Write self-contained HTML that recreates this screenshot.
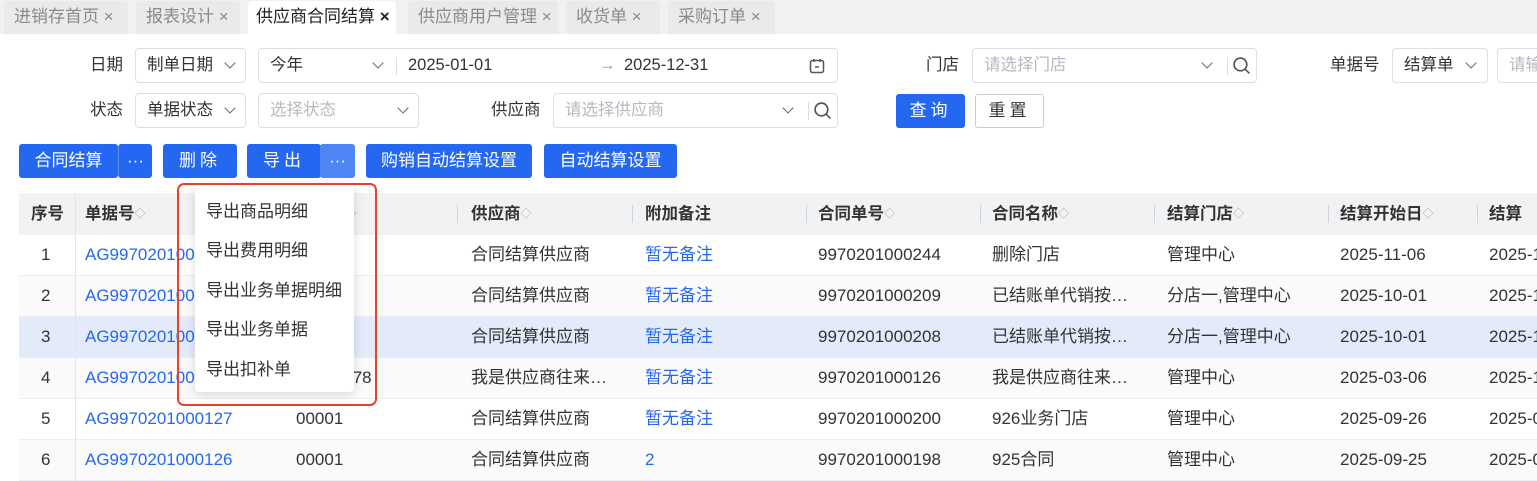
<!DOCTYPE html>
<html><head><meta charset="utf-8"><style>
*{box-sizing:border-box;margin:0;padding:0}
body{width:1537px;height:481px;overflow:hidden;background:#fff;font-family:"Liberation Sans","Noto Sans CJK SC",sans-serif;font-size:17px;color:#333;position:relative}
.a{position:absolute;white-space:nowrap}
.tabbar{position:absolute;left:0;top:0;width:1537px;height:34px;background:#f0f1f3}
.tab{position:absolute;top:1px;height:33px;background:#e9eaec;color:#8a8a8a;font-size:17px;line-height:32px;padding-left:10px;border-radius:4px 4px 0 0}
.tab.act{background:#fff;color:#222}
.box{position:absolute;border:1px solid #dcdfe6;border-radius:4px;background:#fff;height:35px;line-height:33px;padding-left:11px;font-size:16.5px;color:#333}
.ph{color:#b6b9bf}
.lbl{position:absolute;font-size:16.5px;color:#333;line-height:35px}
.chev{position:absolute;top:12px;width:8px;height:8px;border-right:1.5px solid #666;border-bottom:1.5px solid #666;transform:rotate(45deg)}
.btn{position:absolute;top:144px;height:34px;background:#2468f2;color:#fff;border-radius:3px;line-height:34px;text-align:center;font-size:17px}
.th{position:absolute;top:193px;height:42px;line-height:42px;font-weight:bold;font-size:16.5px;color:#333}
.sep{position:absolute;top:205px;width:1px;height:18px;background:#d0d3d8}
.row{position:absolute;left:19px;width:1518px;height:41px;border-bottom:1px solid #ebeef5}
.c{position:absolute;line-height:40px;font-size:17px;color:#333;white-space:nowrap}
.blue{color:#2468f2}
.sort{font-weight:normal;color:#aaa;font-size:11px;vertical-align:2px}
.mi{position:absolute;left:206px;font-size:17px;color:#333}
</style></head><body>
<div class="tabbar"></div>
<div class="tab" style="left:4px;width:124px">进销存首页 ×</div>
<div class="tab" style="left:136px;width:104px">报表设计 ×</div>
<div class="tab act" style="left:248px;width:148px;padding-left:8px">供应商合同结算 <b>×</b></div>
<div class="tab" style="left:408px;width:150px">供应商用户管理 ×</div>
<div class="tab" style="left:566px;width:94px">收货单 ×</div>
<div class="tab" style="left:668px;width:107px">采购订单 ×</div>

<div class="lbl" style="left:90px;top:48px">日期</div>
<div class="box" style="left:135px;top:48px;width:111px">制单日期<span class="chev" style="left:90px;top:10px"></span></div>
<div class="box" style="left:258px;top:48px;width:580px">今年<span class="chev" style="left:115px;top:10px"></span>
<span class="a" style="left:137px;top:8px;width:1px;height:18px;background:#ddd"></span>
<span class="a" style="left:149px;top:0">2025-01-01</span>
<span class="a" style="left:340px;top:0;color:#999">→</span>
<span class="a" style="left:365px;top:0">2025-12-31</span>
<svg class="a" style="left:549px;top:8px" width="18" height="18" viewBox="0 0 18 18" fill="none" stroke="#555" stroke-width="1.5"><rect x="2.5" y="3.5" width="13" height="12" rx="2"/><path d="M6 2v3M12 2v3M7 10h4"/></svg>
</div>
<div class="lbl" style="left:926px;top:48px">门店</div>
<div class="box ph" style="left:972px;top:48px;width:285px">请选择门店<span class="chev" style="left:230px;top:10px"></span>
<span class="a" style="left:254px;top:8px;width:1px;height:18px;background:#ddd"></span>
<svg class="a" style="left:259px;top:7px" width="19" height="19" viewBox="0 0 18 18" fill="none" stroke="#555" stroke-width="1.6"><circle cx="8" cy="8" r="6"/><path d="M12.5 12.5l4 4"/></svg></div>
<div class="lbl" style="left:1330px;top:48px">单据号</div>
<div class="box" style="left:1392px;top:48px;width:96px">结算单<span class="chev" style="left:74px;top:10px"></span></div>
<div class="box ph" style="left:1497px;top:48px;width:60px">请输</div>

<div class="lbl" style="left:90px;top:93px">状态</div>
<div class="box" style="left:135px;top:93px;width:111px">单据状态<span class="chev" style="left:90px;top:10px"></span></div>
<div class="box ph" style="left:258px;top:93px;width:161px">选择状态<span class="chev" style="left:140px;top:10px"></span></div>
<div class="lbl" style="left:491px;top:93px">供应商</div>
<div class="box ph" style="left:553px;top:93px;width:285px">请选择供应商<span class="chev" style="left:230px;top:10px"></span>
<span class="a" style="left:254px;top:8px;width:1px;height:18px;background:#ddd"></span>
<svg class="a" style="left:259px;top:7px" width="19" height="19" viewBox="0 0 18 18" fill="none" stroke="#555" stroke-width="1.6"><circle cx="8" cy="8" r="6"/><path d="M12.5 12.5l4 4"/></svg></div>
<div class="a" style="left:896px;top:94px;width:69px;height:34px;background:#2468f2;color:#fff;border-radius:3px;line-height:34px;text-align:center;letter-spacing:4px;font-size:17px">查询</div>
<div class="a" style="left:975px;top:94px;width:69px;height:34px;border:1px solid #ccc;border-radius:3px;line-height:32px;text-align:center;letter-spacing:4px;font-size:17px">重置</div>

<div class="btn" style="left:19px;width:99px">合同结算</div>
<div class="btn" style="left:118px;width:34px;border-left:1px solid #5a8ef5">···</div>
<div class="btn" style="left:163px;width:74px;letter-spacing:4px">删除</div>
<div class="btn" style="left:247px;width:74px;letter-spacing:4px">导出</div>
<div class="btn" style="left:320px;width:35px;background:#4f86f5">···</div>
<div class="btn" style="left:366px;width:166px">购销自动结算设置</div>
<div class="btn" style="left:544px;width:133px">自动结算设置</div>

<div class="a" style="left:19px;top:193px;width:1518px;height:42px;background:#f1f2f4"></div>
<div class="a" style="left:75px;top:193px;width:1px;height:288px;background:#e4e6ea"></div>
<div class="th" style="left:31px">序号</div>
<div class="th" style="left:85px">单据号<span class="sort">◇</span></div>
<div class="th" style="left:296px">商代码<span class="sort">◇</span></div>
<div class="sep" style="left:457px"></div><div class="th" style="left:471px">供应商<span class="sort">◇</span></div>
<div class="sep" style="left:632px"></div><div class="th" style="left:645px">附加备注</div>
<div class="sep" style="left:806px"></div><div class="th" style="left:818px">合同单号<span class="sort">◇</span></div>
<div class="sep" style="left:980px"></div><div class="th" style="left:992px">合同名称<span class="sort">◇</span></div>
<div class="sep" style="left:1154px"></div><div class="th" style="left:1167px">结算门店<span class="sort">◇</span></div>
<div class="sep" style="left:1328px"></div><div class="th" style="left:1340px">结算开始日<span class="sort">◇</span></div>
<div class="sep" style="left:1477px"></div><div class="th" style="left:1489px">结算截止日</div>

<div class="row" style="top:235px;background:#fff"></div>
<div class="row" style="top:276px;background:#fafafa"></div>
<div class="row" style="top:317px;background:#e3ebfb"></div>
<div class="row" style="top:358px;background:#fafafa"></div>
<div class="row" style="top:399px;background:#fff"></div>
<div class="row" style="top:440px;background:#fafafa"></div>
<div class="a" style="left:75px;top:235px;width:1px;height:246px;background:#e4e6ea"></div>

<div class="c" style="left:41px;top:235px">1</div><div class="c blue" style="left:85px;top:235px">AG9970201000</div><div class="c" style="left:471px;top:235px">合同结算供应商</div><div class="c blue" style="left:645px;top:235px">暂无备注</div><div class="c" style="left:818px;top:235px">9970201000244</div><div class="c" style="left:992px;top:235px">删除门店</div><div class="c" style="left:1167px;top:235px">管理中心</div><div class="c" style="left:1340px;top:235px">2025-11-06</div><div class="c" style="left:1489px;top:235px">2025-12</div>
<div class="c" style="left:41px;top:276px">2</div><div class="c blue" style="left:85px;top:276px">AG9970201000</div><div class="c" style="left:471px;top:276px">合同结算供应商</div><div class="c blue" style="left:645px;top:276px">暂无备注</div><div class="c" style="left:818px;top:276px">9970201000209</div><div class="c" style="left:992px;top:276px">已结账单代销按…</div><div class="c" style="left:1167px;top:276px">分店一,管理中心</div><div class="c" style="left:1340px;top:276px">2025-10-01</div><div class="c" style="left:1489px;top:276px">2025-12</div>
<div class="c" style="left:41px;top:317px">3</div><div class="c blue" style="left:85px;top:317px">AG9970201000</div><div class="c" style="left:471px;top:317px">合同结算供应商</div><div class="c blue" style="left:645px;top:317px">暂无备注</div><div class="c" style="left:818px;top:317px">9970201000208</div><div class="c" style="left:992px;top:317px">已结账单代销按…</div><div class="c" style="left:1167px;top:317px">分店一,管理中心</div><div class="c" style="left:1340px;top:317px">2025-10-01</div><div class="c" style="left:1489px;top:317px">2025-12</div>
<div class="c" style="left:41px;top:358px">4</div><div class="c blue" style="left:85px;top:358px">AG9970201000</div><div class="c" style="left:296px;top:358px">00000678</div><div class="c" style="left:471px;top:358px">我是供应商往来…</div><div class="c blue" style="left:645px;top:358px">暂无备注</div><div class="c" style="left:818px;top:358px">9970201000126</div><div class="c" style="left:992px;top:358px">我是供应商往来…</div><div class="c" style="left:1167px;top:358px">管理中心</div><div class="c" style="left:1340px;top:358px">2025-03-06</div><div class="c" style="left:1489px;top:358px">2025-12</div>
<div class="c" style="left:41px;top:399px">5</div><div class="c blue" style="left:85px;top:399px">AG9970201000127</div><div class="c" style="left:296px;top:399px">00001</div><div class="c" style="left:471px;top:399px">合同结算供应商</div><div class="c blue" style="left:645px;top:399px">暂无备注</div><div class="c" style="left:818px;top:399px">9970201000200</div><div class="c" style="left:992px;top:399px">926业务门店</div><div class="c" style="left:1167px;top:399px">管理中心</div><div class="c" style="left:1340px;top:399px">2025-09-26</div><div class="c" style="left:1489px;top:399px">2025-09</div>
<div class="c" style="left:41px;top:440px">6</div><div class="c blue" style="left:85px;top:440px">AG9970201000126</div><div class="c" style="left:296px;top:440px">00001</div><div class="c" style="left:471px;top:440px">合同结算供应商</div><div class="c blue" style="left:645px;top:440px">2</div><div class="c" style="left:818px;top:440px">9970201000198</div><div class="c" style="left:992px;top:440px">925合同</div><div class="c" style="left:1167px;top:440px">管理中心</div><div class="c" style="left:1340px;top:440px">2025-09-25</div><div class="c" style="left:1489px;top:440px">2025-09</div>

<div class="a" style="left:195px;top:185px;width:159px;height:207px;background:#fff;border-radius:4px;box-shadow:0 2px 10px rgba(0,0,0,.15)"></div>
<div class="a" style="left:177px;top:183px;width:200px;height:223px;border:2.5px solid #e8412c;border-radius:7px"></div>
<div class="mi" style="top:197px">导出商品明细</div>
<div class="mi" style="top:236px">导出费用明细</div>
<div class="mi" style="top:276px">导出业务单据明细</div>
<div class="mi" style="top:315px">导出业务单据</div>
<div class="mi" style="top:355px">导出扣补单</div>
</body></html>
